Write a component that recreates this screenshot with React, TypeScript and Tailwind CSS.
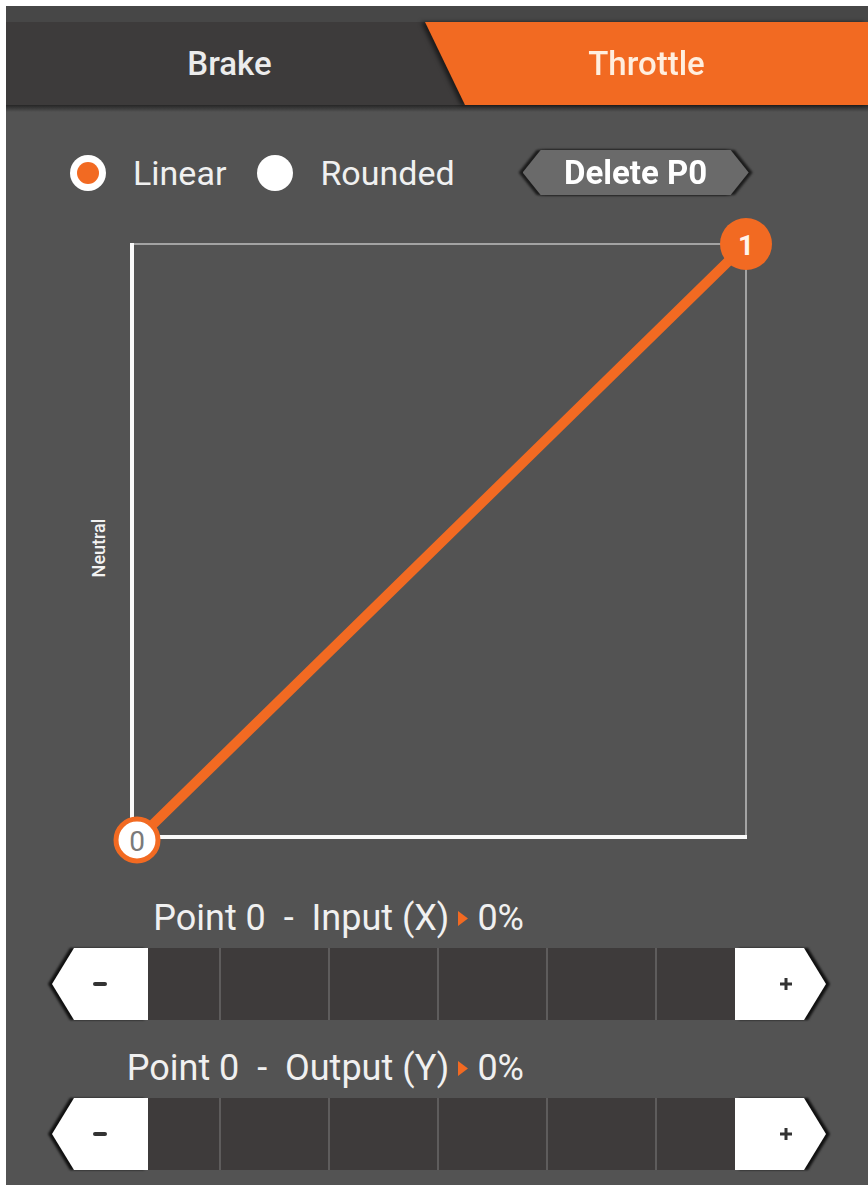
import React from "react";

const ORANGE = "#f26a22";

// Curve editor for the throttle channel: tabs, curve type, chart and point sliders.

function TabBar() {
  return (
    <div className="flex h-[83px] bg-[#3d3b3b]">
      <div className="flex w-[459px] shrink-0 items-center justify-center pr-[12px] text-[33px] font-medium text-[#ececec]">
        Brake
      </div>
      <div className="-ml-[40px] flex-1 [filter:drop-shadow(-4px_0_2px_rgba(0,0,0,0.55))]">
        <div className="flex h-full items-center justify-center bg-[#f26a22] text-[33px] font-medium text-[#ffeede] [clip-path:polygon(0_0,100%_0,100%_100%,40px_100%)]">
          Throttle
        </div>
      </div>
    </div>
  );
}

function Radio({ checked, label }: { checked?: boolean; label: string }) {
  return (
    <div className="flex items-center gap-[27px]">
      <span className="flex h-[36px] w-[36px] items-center justify-center rounded-full bg-white">
        {checked && <span className="h-[22px] w-[22px] rounded-full bg-[#f26a22]" />}
      </span>
      <span className="text-[34px] leading-none text-[#f0f0f0]">{label}</span>
    </div>
  );
}

function DeleteButton() {
  return (
    <div className="[filter:drop-shadow(-4px_0_1px_#1c1c1c)_drop-shadow(4px_0_1px_#1c1c1c)]">
      <div className="flex h-[45px] w-[226px] items-center justify-center bg-[#6a6a6a] text-[33px] font-bold text-white [clip-path:polygon(18px_0,calc(100%-18px)_0,100%_50%,calc(100%-18px)_100%,18px_100%,0_50%)]">
        Delete P0
      </div>
    </div>
  );
}

function CurveChart() {
  // origin and far corner of the plot, in svg units
  const x0 = 62;
  const y0 = 623;
  const x1 = 676;
  const y1 = 30;
  return (
    <svg width={740} height={660} className="block">
      <text
        x={28}
        y={334}
        transform="rotate(-90 28 334)"
        textAnchor="middle"
        dominantBaseline="central"
        fill="#f2f2f2"
        fontSize={18}
        fontWeight={500}
        fontFamily="Roboto, sans-serif"
      >
        Neutral
      </text>
      <line x1={x0} y1={y1} x2={x1} y2={y1} stroke="#a3a3a3" strokeWidth={2} />
      <line x1={x1} y1={y1} x2={x1} y2={y0} stroke="#a3a3a3" strokeWidth={2} />
      <line x1={x0} y1={y1 - 1} x2={x0} y2={y0 + 2} stroke="#fafafa" strokeWidth={4} />
      <line x1={x0 - 2} y1={y0} x2={x1 + 1} y2={y0} stroke="#fafafa" strokeWidth={4} />
      <line x1={67} y1={626} x2={x1} y2={y1} stroke={ORANGE} strokeWidth={10} strokeLinecap="round" />
      <circle cx={x1} cy={y1} r={26} fill={ORANGE} />
      <text
        x={x1}
        y={y1 + 1}
        textAnchor="middle"
        dominantBaseline="central"
        fill="#fff4ea"
        fontSize={28}
        fontWeight={700}
        fontFamily="Roboto, sans-serif"
      >
        1
      </text>
      <circle cx={67} cy={626} r={21} fill="#ffffff" stroke={ORANGE} strokeWidth={5} />
      <text
        x={67}
        y={627}
        textAnchor="middle"
        dominantBaseline="central"
        fill="#7a7a7a"
        fontSize={28}
        fontFamily="Roboto, sans-serif"
      >
        0
      </text>
    </svg>
  );
}

function PointLabel({ text }: { text: string }) {
  return (
    <div className="flex w-[518px] items-center justify-end gap-[8px] text-[36px] leading-[40px] text-[#f0f0f0]">
      <span className="whitespace-pre">{text}</span>
      <svg width={10} height={15} viewBox="0 0 10 15" className="mx-[1px]">
        <polygon points="0,0 10,7.5 0,15" fill={ORANGE} />
      </svg>
      <span>0%</span>
    </div>
  );
}

function Stepper() {
  return (
    <div className="flex h-[72px] w-[782px]">
      <div className="w-[100px] shrink-0 pl-[4px] [filter:drop-shadow(-4px_0_1px_#111)]">
        <div className="flex h-full items-center justify-center bg-white [clip-path:polygon(22px_0,100%_0,100%_100%,22px_100%,0_50%)]">
          <span className="h-[4px] w-[14px] rounded-sm bg-[#333]" />
        </div>
      </div>
      <div className="flex flex-1 bg-[#3e3b3b]">
        <div className="w-[73px] border-r-2 border-[#5e5c5c]" />
        <div className="flex-1 border-r-2 border-[#5e5c5c]" />
        <div className="flex-1 border-r-2 border-[#5e5c5c]" />
        <div className="flex-1 border-r-2 border-[#5e5c5c]" />
        <div className="flex-1 border-r-2 border-[#5e5c5c]" />
        <div className="w-[78px]" />
      </div>
      <div className="w-[95px] shrink-0 pr-[4px] [filter:drop-shadow(4px_0_1px_#111)]">
        <div className="flex h-full items-center justify-center bg-white pl-[10px] [clip-path:polygon(0_0,calc(100%-22px)_0,100%_50%,calc(100%-22px)_100%,0_100%)]">
          <svg width={12} height={12} viewBox="0 0 12 12">
            <rect x={4.5} y={0} width={3} height={12} fill="#333" />
            <rect x={0} y={4.5} width={12} height={3} fill="#333" />
          </svg>
        </div>
      </div>
    </div>
  );
}

export default function App() {
  return (
    <div className="min-h-[1185px] bg-white pl-[6px] pt-[6px] font-['Roboto',sans-serif]">
      <div className="min-h-[1179px] bg-[#535353]">
        <div className="h-[16px] bg-[#474747]" />
        <TabBar />
        <div className="h-[7px] bg-linear-to-b from-[#262626] to-[#535353]" />

        <div className="mt-[38px] flex h-[45px] items-center pl-[64px]">
          <Radio checked label="Linear" />
          <div className="ml-[31px]">
            <Radio label="Rounded" />
          </div>
          <div className="ml-[68px]">
            <DeleteButton />
          </div>
        </div>

        <div className="mt-[19px] pl-[64px]">
          <CurveChart />
        </div>

        <div className="mt-[24px]">
          <PointLabel text="Point 0  -  Input (X)" />
        </div>
        <div className="mt-[10px] pl-[42px]">
          <Stepper />
        </div>

        <div className="mt-[28px]">
          <PointLabel text="Point 0  -  Output (Y)" />
        </div>
        <div className="mt-[10px] pl-[42px]">
          <Stepper />
        </div>
      </div>
    </div>
  );
}
